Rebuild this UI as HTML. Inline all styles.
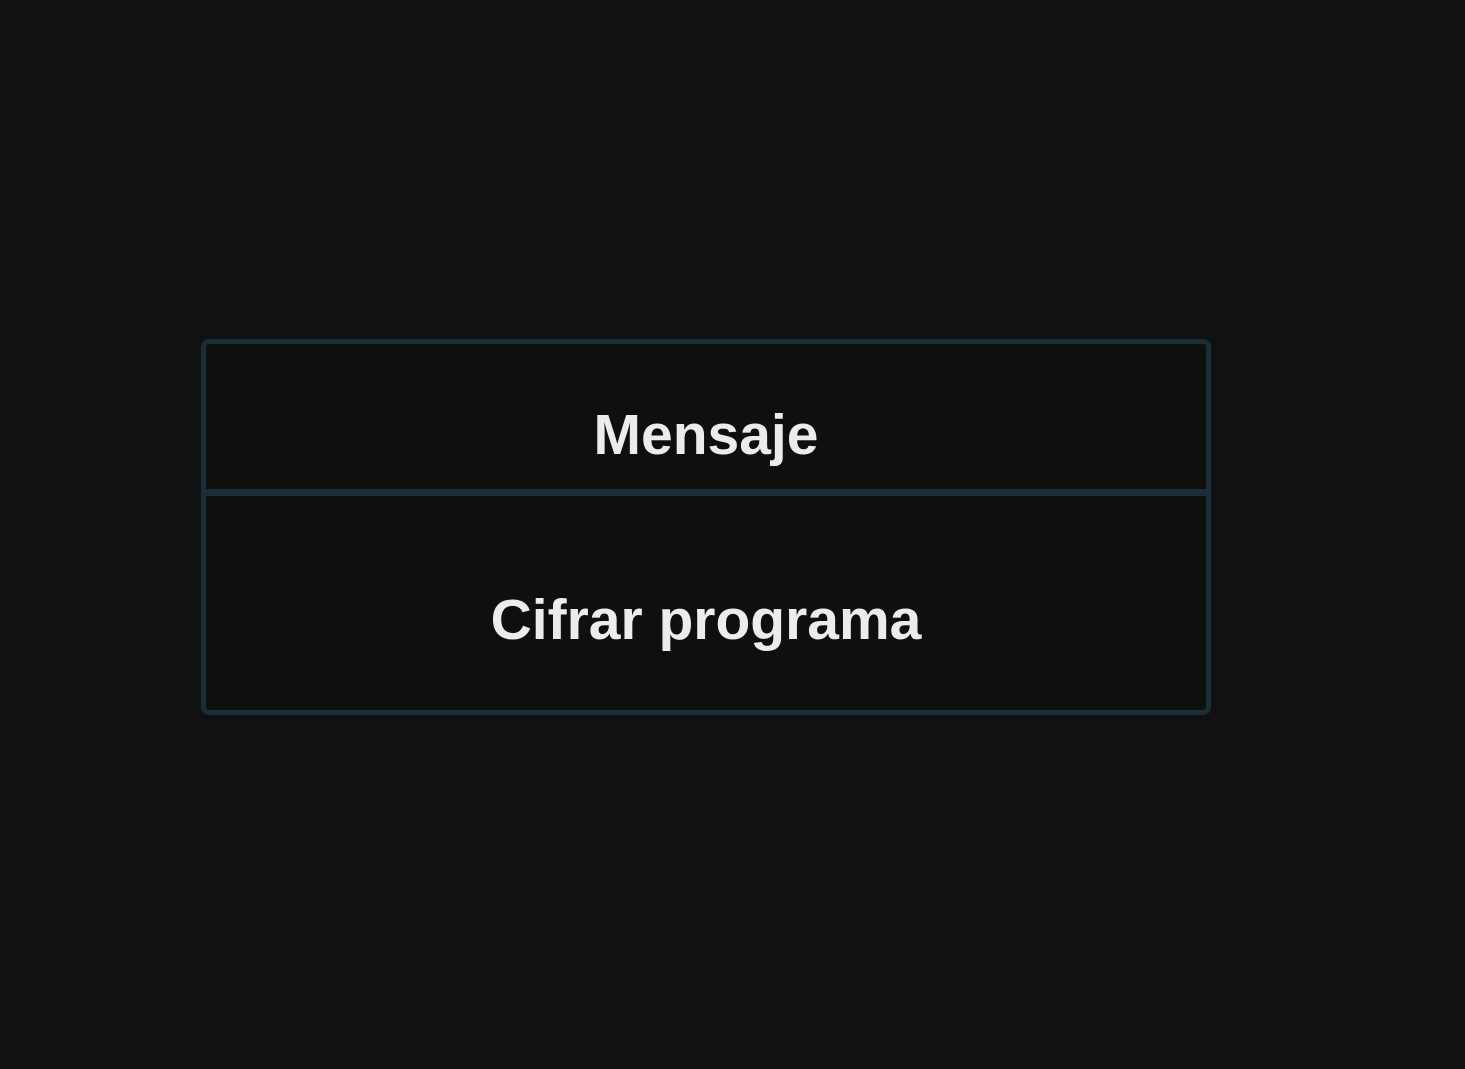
<!DOCTYPE html>
<html><head><style>
body{margin:0;width:1465px;height:1069px;background:#111012;overflow:hidden;font-family:"Liberation Sans",sans-serif;}
.box{position:absolute;left:201px;top:339px;width:1000px;height:366px;border:5px solid #1b2d37;border-radius:8px;background:#0f0f0e;box-shadow:0 0 4px #0e1a20;}
.div{position:absolute;left:0;right:0;top:145px;height:7px;background:#1b2d37;}
.t{position:absolute;left:0;right:0;text-align:center;color:#ececea;font-weight:bold;font-size:57px;}
</style></head><body>
<div class="box">
<div class="t" style="top:58px">Mensaje</div>
<div class="div"></div>
<div class="t" style="top:243px">Cifrar programa</div>
</div>
</body></html>
